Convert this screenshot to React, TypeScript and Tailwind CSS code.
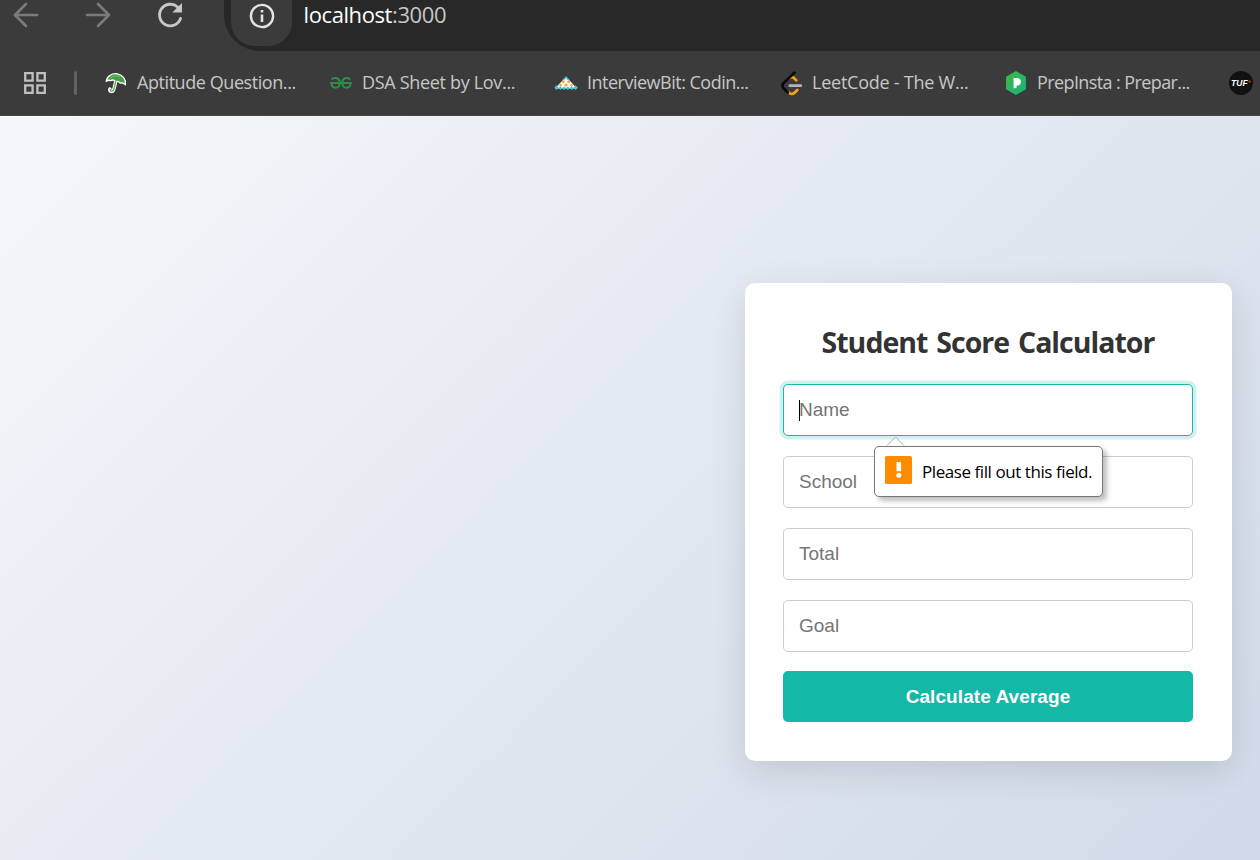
import React from "react";

const UI = "font-['Open_Sans','Noto_Sans',sans-serif]";
const ARIAL = "font-['Liberation_Sans',Arial,sans-serif]";

function BackIcon() {
  return (
    <svg width="26" height="26" viewBox="0 0 26 26" fill="none" stroke="#7b7b7b" strokeWidth="2.6" strokeLinecap="round" strokeLinejoin="round">
      <path d="M24 13H2M13 2L2 13l11 11" />
    </svg>
  );
}

function ForwardIcon() {
  return (
    <svg width="26" height="26" viewBox="0 0 26 26" fill="none" stroke="#7b7b7b" strokeWidth="2.6" strokeLinecap="round" strokeLinejoin="round">
      <path d="M2 13h22M13 2l11 11-11 11" />
    </svg>
  );
}

function ReloadIcon() {
  return (
    <svg width="28" height="28" viewBox="0 0 28 28" fill="none">
      <path d="M24.6 17.4A10.8 10.8 0 1 1 21.6 6" stroke="#c7c7c7" strokeWidth="2.9" strokeLinecap="round" />
      <path d="M26 2v9.6h-9.8z" fill="#c7c7c7" />
    </svg>
  );
}

function InfoIcon() {
  return (
    <svg width="26" height="26" viewBox="0 0 26 26" fill="none">
      <circle cx="13" cy="13" r="11.1" stroke="#e3e3e3" strokeWidth="2.4" />
      <path d="M11.7 11.6h2.6v7.4h-2.6zM11.7 7h2.6v2.6h-2.6z" fill="#e3e3e3" />
    </svg>
  );
}

function AppsIcon() {
  return (
    <svg width="22" height="22" viewBox="0 0 22 22" fill="none" stroke="#c0c0c0" strokeWidth="2.3">
      <path d="M1.2 1.2h7.4v7.4H1.2zM13.4 1.2h7.4v7.4h-7.4zM1.2 13.4h7.4v7.4H1.2zM13.4 13.4h7.4v7.4h-7.4z" />
    </svg>
  );
}

function UmbrellaIcon() {
  return (
    <svg width="22" height="22" viewBox="0 0 22 22" fill="none" strokeLinecap="round" strokeLinejoin="round">
      <path d="M10.8 9.5L8.8 17.4Q7.8 20.2 5.6 19.3Q4.4 18.6 4.9 17" stroke="#fff" strokeWidth="3.4" />
      <path d="M1.2 9.4C2 4 7 .9 12.3 1.8C17.8 2.9 21.2 7.4 20.4 12.8C18.8 11.2 17 10.5 15.3 11.2C14.3 9.6 12.4 9 10.7 9.7C9.3 8 7.4 7.6 5.9 8.6C4.2 8 2.5 8.3 1.2 9.4Z" fill="#43a047" stroke="#fff" strokeWidth="1.3" />
      <path d="M10.8 9.4L8.8 17.4Q7.8 19.8 5.8 18.9Q5.2 18.4 5.3 17.6" stroke="#4caf50" strokeWidth="1.3" />
      <path d="M6 5.6C8.6 3.6 12 3.6 14.4 4.8" stroke="#66bb5c" strokeWidth="1.3" />
    </svg>
  );
}

function GfgIcon() {
  return (
    <svg width="22" height="12" viewBox="0 0 22 12" fill="none" stroke="#2f8d46" strokeWidth="2">
      <path d="M.2 5.9h21.6M1.7 2.6C3 .9 5 .8 6.7 1.3C9 2.1 10 3.8 9.8 6C9.5 9 7.8 10.8 5.3 10.8C2.8 10.8 1.2 8.8 1.3 5.8" />
      <path d="M20.3 2.6C19 .9 17 .8 15.3 1.3C13 2.1 12 3.8 12.2 6C12.5 9 14.2 10.8 16.7 10.8C19.2 10.8 20.8 8.8 20.7 5.8" />
    </svg>
  );
}

function InterviewBitIcon() {
  return (
    <svg width="24" height="14" viewBox="0 0 24 14">
      <path d="M12 .8L23 12.5H1z" fill="#fff" />
      <path d="M8.4 3.8L12 .2l3.6 3.6-1.8.4L12 2.6l-1.8 1.6z" fill="#46c5cf" />
      <path d="M7.2 5.8l2-1.8 1.8 1.8-1.8 1.8zM13 5.8L14.8 4l2 1.8-2 1.8zM10 9l2-1.8L14 9l-2 1.8zM4.8 9.2l1.8-1.6 1.6 1.6-1.6 1.6zM15.8 9.2l1.6-1.6 1.8 1.6-1.8 1.6z" fill="#f5a637" />
      <path d="M.3 11.6L2.4 9.2l2.3 2.4-2.3 2.3zM4.5 12.2l1.9-1.9 1.9 1.9-1.9 1.8zM8.3 12.2l1.8-1.9 1.9 1.9-1.9 1.8zM12 12.2l1.9-1.9 1.8 1.9-1.8 1.8zM15.7 12.2l1.9-1.9 1.9 1.9-1.9 1.8zM19.3 11.6l2.3-2.4 2.3 2.4-2.3 2.3z" fill="#46c5cf" />
    </svg>
  );
}

function LeetCodeIcon() {
  return (
    <svg className="relative left-px" width="22" height="25" viewBox="0 0 22 25" fill="none" strokeWidth="2.7" strokeLinecap="round" strokeLinejoin="round">
      <path d="M9 6.8Q10.8 5.2 12.6 6.8L15.3 9.4M7.5 21.3Q10.7 24.6 13.8 21.5L16.3 19" stroke="#ffa116" />
      <path d="M13.4 1.7L2.3 12.4Q.5 14.6 2.3 16.9L6.8 21.5" stroke="#080808" />
      <path d="M8.8 14.7h11" stroke="#b8b4b4" />
    </svg>
  );
}

function PrepInstaIcon() {
  return (
    <svg width="22" height="24" viewBox="0 0 20 24">
      <defs>
        <linearGradient id="prep" x1="0" y1="0" x2="1" y2="1">
          <stop offset="0" stopColor="#42b649" />
          <stop offset="1" stopColor="#16b47a" />
        </linearGradient>
      </defs>
      <path d="M10 .8L19.2 6v12L10 23.2.8 18V6z" fill="url(#prep)" stroke="url(#prep)" strokeWidth="1.4" strokeLinejoin="round" />
      <path d="M7.6 7h3.5a3.8 3.8 0 0 1 0 7.6q-.6 0-.6 1v1.2l-2.9.8z" fill="#fff" />
    </svg>
  );
}

function TufIcon() {
  return (
    <span className="flex h-6 w-6 shrink-0 items-center justify-center rounded-full bg-[#111111]">
      <span className={`${ARIAL} whitespace-nowrap text-[8.5px] font-bold italic leading-none tracking-[0.2px] text-white`}>
        TUF<span className="align-top text-[5px] text-[#e0562f]">+</span>
      </span>
    </span>
  );
}

const bookmarks = [
  { label: "Aptitude Question...", icon: <UmbrellaIcon />, track: "tracking-[-0.43px]" },
  { label: "DSA Sheet by Lov...", icon: <GfgIcon />, track: "tracking-[-0.32px]" },
  { label: "InterviewBit: Codin...", icon: <InterviewBitIcon />, track: "tracking-[-0.5px]" },
  { label: "LeetCode - The W...", icon: <LeetCodeIcon />, track: "tracking-[-0.24px]" },
  { label: "PrepInsta : Prepar...", icon: <PrepInstaIcon />, track: "tracking-[-0.6px]" },
];

function BrowserChrome() {
  return (
    <header className={`${UI} h-[116px] w-[1260px] shrink-0 overflow-hidden border-b border-[#434546] bg-[#3b3b3b]`}>
      <div className="flex h-[51px] items-start">
        <div className="flex w-[224px] shrink-0 pl-[13px] pt-[2px]">
          <div className="w-[72px]"><BackIcon /></div>
          <div className="w-[71px]"><ForwardIcon /></div>
          <div className="-mt-px"><ReloadIcon /></div>
        </div>
        <div className="flex h-[51px] flex-1 items-start rounded-bl-[36px] bg-[#282828] pl-[7px]">
          <div className="flex h-[46px] w-[61px] items-start justify-center rounded-b-[24px] bg-[#3b3b3b] pt-[3px]">
            <InfoIcon />
          </div>
          <div className="-mt-px ml-[11.5px] whitespace-nowrap text-[22px] leading-[30px] tracking-[-0.4px] text-[#c7c7c7]">
            <span className="text-white">localhost</span>:3000
          </div>
        </div>
      </div>
      <nav className="flex h-16 items-center pl-6">
        <div className="w-[50px]"><AppsIcon /></div>
        <div className="mr-[27px] h-6 w-[3px] rounded-full bg-[#626262]" />
        {bookmarks.map((b) => (
          <div key={b.label} className="flex w-[225px] shrink-0 items-center">
            <span className="flex w-6 shrink-0 justify-center">{b.icon}</span>
            <span className={`-mt-0.5 ml-[9px] whitespace-nowrap text-[18px] leading-6 text-[#c7c7c7] ${b.track}`}>{b.label}</span>
          </div>
        ))}
        <TufIcon />
      </nav>
    </header>
  );
}

function ValidationBubble() {
  return (
    <div className="absolute left-[91px] top-[62px] z-10 flex h-[51px] w-[229px] items-center rounded-[5px] border border-[#777] bg-white pl-[10px] shadow-[4px_4px_5px_rgba(0,0,0,0.25)]">
      <svg className="absolute left-[11px] top-[-11px]" width="19" height="10" viewBox="0 0 19 10">
        <path d="M1 9.5L9.5 1 18 9.5" fill="#fff" stroke="#aaa" />
      </svg>
      <svg className="-mt-[3px] shrink-0" width="27" height="28" viewBox="0 0 27 28">
        <rect width="27" height="28" rx="1.5" fill="#ff8c00" />
        <path d="M11.5 6h4.6v9.2h-4.6z" fill="#fff" />
        <circle cx="13.8" cy="19.2" r="2.5" fill="#fff" />
      </svg>
      <span className={`${UI} ml-[10px] whitespace-nowrap text-[17px] leading-6 tracking-[-0.43px] text-black`}>Please fill out this field.</span>
    </div>
  );
}

function Field({ label, focused = false }: { label: string; focused?: boolean }) {
  return (
    <div className="relative mb-5 h-[52px]">
      <input
        placeholder={label}
        className={`${ARIAL} h-[52px] w-full rounded-[5px] border bg-white px-[15px] text-[19px] outline-none placeholder:text-[#757575] placeholder:opacity-100 ${
          focused ? "border-[#14b8a6] shadow-[0_0_0_3.5px_rgba(20,184,166,0.2)]" : "border-[#cccccc]"
        }`}
      />
      {focused && <span className="absolute left-4 top-4 h-[21px] w-px bg-black" />}
      {focused && <ValidationBubble />}
    </div>
  );
}

export default function App() {
  return (
    <div className="flex h-[860px] w-[1260px] flex-col overflow-hidden">
      <BrowserChrome />
      <main className="flex h-[812px] w-[1977px] shrink-0 items-center justify-center bg-[linear-gradient(135deg,#f5f7fa_0%,#c3cfe2_100%)]">
        <form className="h-[478px] w-[487px] rounded-[10px] bg-white pl-[38px] pr-[39px] pt-[38px] shadow-[0_10px_36px_rgba(0,0,0,0.12)]">
          <h1 className={`${UI} mb-[23px] h-10 whitespace-nowrap text-center text-[28.5px] font-bold leading-[42px] tracking-[-0.98px] [word-spacing:2.4px] text-[#333]`}>
            Student Score Calculator
          </h1>
          <Field label="Name" focused />
          <Field label="School" />
          <Field label="Total" />
          <Field label="Goal" />
          <button type="button" className={`${ARIAL} -mt-px block h-[51px] w-full rounded-[5px] bg-[#14b8a6] pt-px text-[19px] font-bold tracking-[0.08px] text-white`}>
            Calculate Average
          </button>
        </form>
      </main>
    </div>
  );
}
